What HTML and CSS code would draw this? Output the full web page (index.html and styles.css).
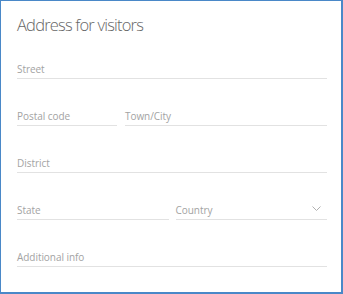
FILE: index.html
```html
<!DOCTYPE html>
<html>
<head>
<meta charset="utf-8">
<link rel="stylesheet" href="styles.css">
</head>
<body>
<div class="card">
  <h2 class="title">Address for visitors</h2>
  <div class="form">
    <div class="field"><span class="label">Street</span></div>
    <div class="row row-a">
      <div class="field"><span class="label">Postal code</span></div>
      <div class="field"><span class="label">Town/City</span></div>
    </div>
    <div class="field"><span class="label">District</span></div>
    <div class="row row-b">
      <div class="field"><span class="label">State</span></div>
      <div class="field select"><span class="label">Country</span>
        <svg class="chev" width="9" height="5" viewBox="0 0 9 5"><path d="M0.5 0.5 L4.5 4.5 L8.5 0.5" fill="none" stroke="#b0b0b0" stroke-width="1"/></svg>
      </div>
    </div>
    <div class="field"><span class="label">Additional info</span></div>
  </div>
</div>
</body>
</html>
```
FILE: styles.css
```css
html, body { margin: 0; padding: 0; background: #fff; }
.card {
  width: 343px;
  height: 294px;
  box-sizing: border-box;
  border: 1px solid #4a88c8;
  border-right-width: 2px;
  border-bottom-width: 2px;
  padding: 12px 14px 0 16px;
  font-family: "Open Sans", "Noto Sans", sans-serif;
}
.title {
  margin: 0;
  font-size: 16.5px;
  line-height: 24px;
  font-weight: 300;
  letter-spacing: -0.8px;
  color: #666;
}
.form {
  margin-top: 21px;
  display: flex;
  flex-direction: column;
  gap: 26px;
}
.row { display: grid; gap: 8px; }
.row-a { grid-template-columns: 100px 1fr; }
.row-b { grid-template-columns: 1fr 1fr; gap: 7px; }
.field {
  height: 21px;
  box-sizing: border-box;
  border-bottom: 1px solid #e2e2e2;
  display: flex;
  align-items: flex-end;
  justify-content: space-between;
  padding-bottom: 2px;
}
.label {
  font-size: 10px;
  line-height: 14px;
  letter-spacing: -0.05px;
  color: #a3a3a3;
}
.chev { margin: 0 6px 6px 0; }
```
